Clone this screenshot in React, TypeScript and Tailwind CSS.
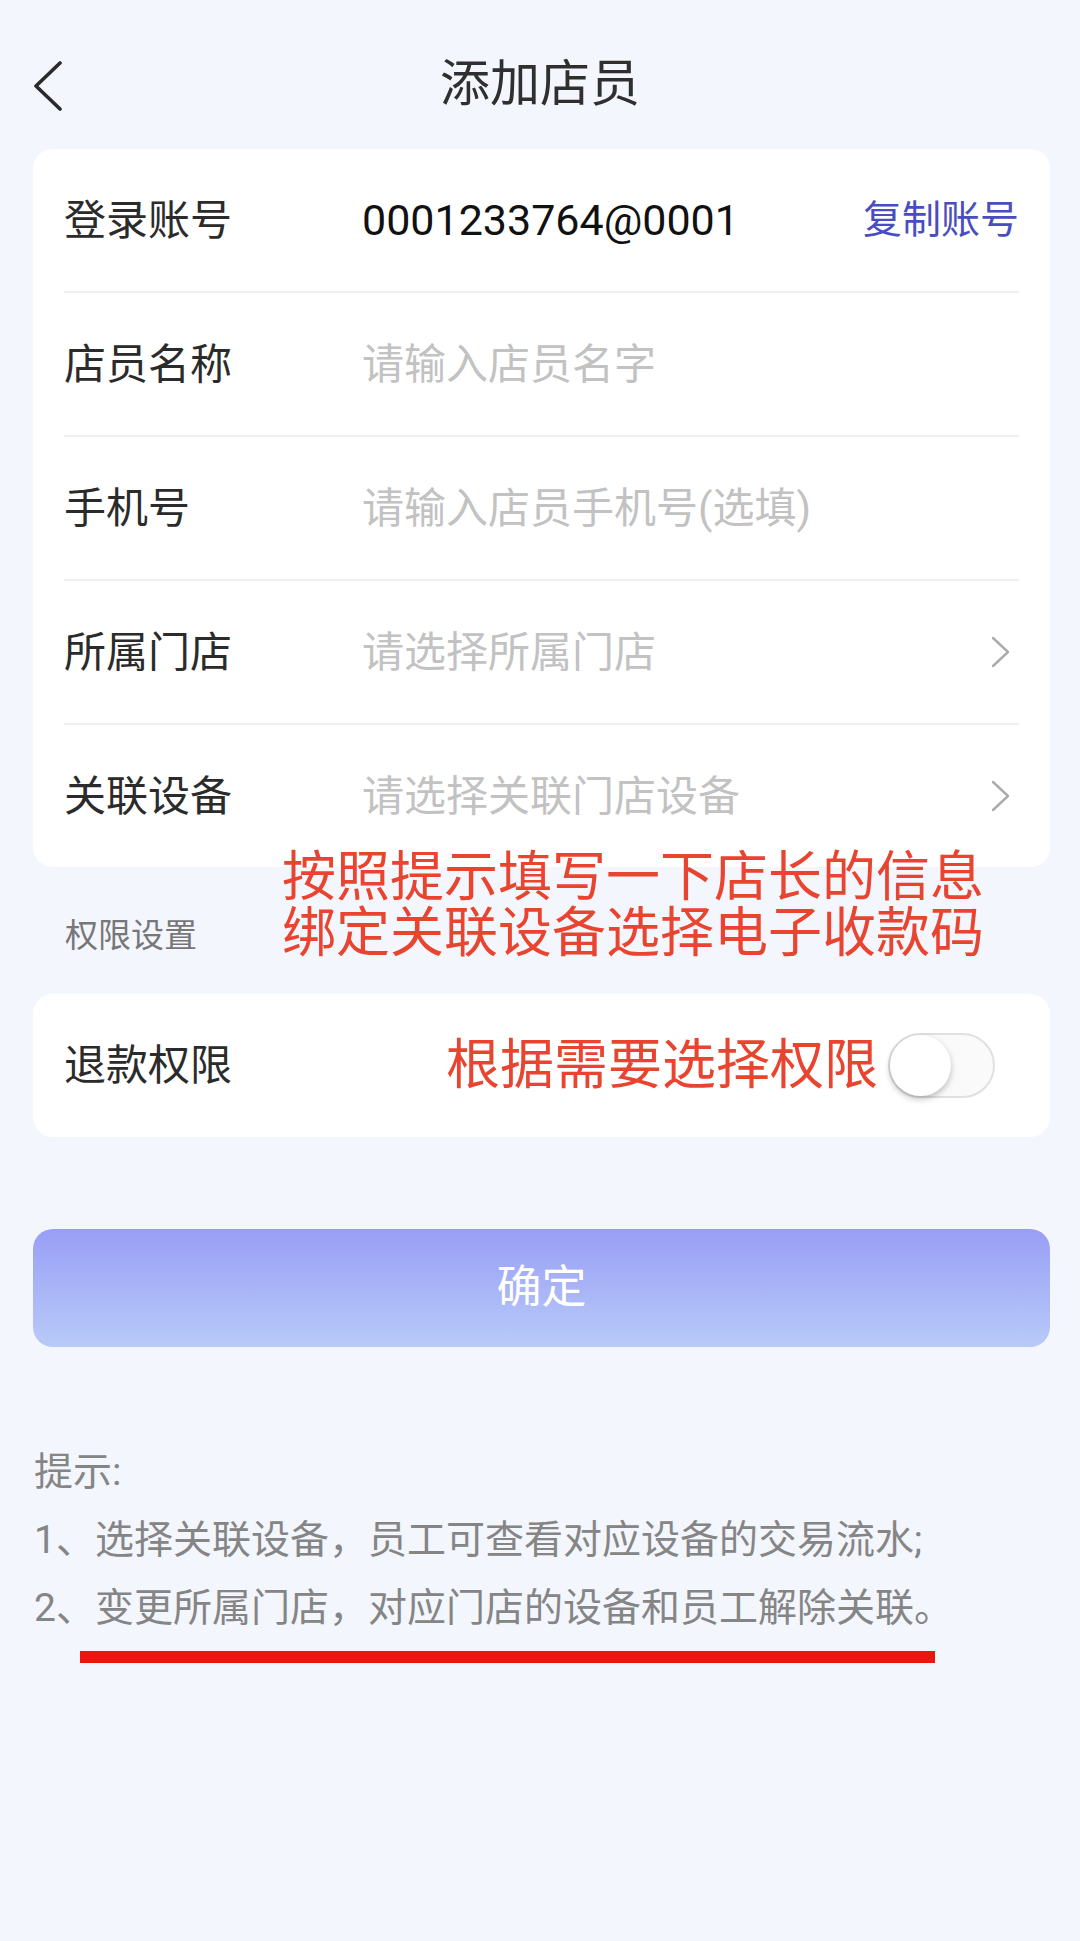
import { useState } from "react";

const Chevron = () => (
  <svg width="19" height="32" viewBox="0 0 19 32" fill="none" className="mr-[9px] shrink-0">
    <polyline points="2,2 17,16 2,30" stroke="#ababab" strokeWidth="2.4" strokeLinecap="round" strokeLinejoin="round" />
  </svg>
);

const fields = [
  { label: "店员名称", placeholder: "请输入店员名字", type: "input" },
  { label: "手机号", placeholder: "请输入店员手机号(选填)", type: "input" },
  { label: "所属门店", placeholder: "请选择所属门店", type: "select" },
  { label: "关联设备", placeholder: "请选择关联门店设备", type: "select" },
];

export default function App() {
  const [refund, setRefund] = useState(false);

  return (
    <div className="min-h-screen bg-[#f3f6fd] pt-[44px] pb-[100px] font-[Roboto,'Noto_Sans_CJK_SC',sans-serif]">
      {/* Nav bar */}
      <header className="relative flex h-[80px] items-center justify-center">
        <button className="absolute left-[30px] top-[13px] p-[4px]" aria-label="返回">
          <svg width="30" height="50" viewBox="0 0 30 50" fill="none">
            <polyline points="26,2 2,25 26,48" stroke="#2a2a2a" strokeWidth="3.6" strokeLinecap="round" strokeLinejoin="round" />
          </svg>
        </button>
        <h1 className="text-[50px] leading-none text-[#2f2f2f]">添加店员</h1>
      </header>

      {/* Form card */}
      <div className="mt-[25px] ml-[33px] mr-[30px] rounded-[20px] bg-white px-[31px]">
        <div className="flex h-[144px] items-center border-b-2 border-[#f0f0f0]">
          <span className="w-[298px] shrink-0 text-[42px] text-[#2b2b2b]">登录账号</span>
          <span className="flex-1 text-[43px] text-[#111]">0001233764@0001</span>
          <button className="text-[39px] text-[#4a4dbf]">复制账号</button>
        </div>
        {fields.map((f, i) => (
          <div
            key={f.label}
            className={
              i < fields.length - 1
                ? "flex h-[144px] items-center border-b-2 border-[#f0f0f0]"
                : "flex h-[142px] items-center"
            }
          >
            <span className="w-[298px] shrink-0 text-[42px] text-[#2b2b2b]">{f.label}</span>
            {f.type === "input" ? (
              <input
                className="min-w-0 flex-1 bg-transparent text-[42px] text-[#222] outline-none placeholder:text-[#c2c2c2]"
                placeholder={f.placeholder}
              />
            ) : (
              <>
                <span className="flex-1 text-[42px] text-[#c2c2c2]">{f.placeholder}</span>
                <Chevron />
              </>
            )}
          </div>
        ))}
      </div>

      {/* Section title + annotation */}
      <div className="relative flex h-[127px] items-center pt-[9px] pl-[65px]">
        <span className="text-[33px] leading-none text-[#777]">权限设置</span>
        <div className="absolute left-[282px] top-[-17px] text-[54px] leading-[56px] text-[#e8442f]">
          <p>按照提示填写一下店长的信息</p>
          <p>绑定关联设备选择电子收款码</p>
        </div>
      </div>

      {/* Permission card */}
      <div className="ml-[33px] mr-[30px] flex h-[143px] items-center rounded-[20px] bg-white px-[31px]">
        <span className="flex-1 text-[42px] text-[#2b2b2b]">退款权限</span>
        <span className="text-[54px] leading-none text-[#e8442f]">根据需要选择权限</span>
        <button
          role="switch"
          aria-checked={refund}
          onClick={() => setRefund(!refund)}
          className="ml-[10px] mr-[24px] flex h-[65px] w-[107px] shrink-0 items-center rounded-full border-2 border-[#e0e0e0] bg-[#fafafa]"
        >
          <span
            className={
              refund
                ? "ml-[42px] h-[61px] w-[61px] rounded-full bg-white shadow-[0_3px_6px_rgba(0,0,0,0.25)]"
                : "h-[61px] w-[61px] rounded-full bg-white shadow-[0_3px_6px_rgba(0,0,0,0.25)]"
            }
          />
        </button>
      </div>

      {/* Submit */}
      <button className="mt-[92px] ml-[33px] mr-[30px] flex h-[118px] w-[1017px] items-center justify-center rounded-[20px] bg-gradient-to-b from-[#999ef5] to-[#b8caf8] text-[45px] text-white">
        确定
      </button>

      {/* Tips */}
      <div className="mt-[91px] pl-[34px] text-[39px] leading-[68px] text-[#858585]">
        <p>提示:</p>
        <p>1、选择关联设备，员工可查看对应设备的交易流水;</p>
        <p>2、变更所属门店，对应门店的设备和员工解除关联。</p>
      </div>
      <div className="mt-[9px] ml-[80px] h-[12px] w-[855px] bg-[#e8190c]" />
    </div>
  );
}
